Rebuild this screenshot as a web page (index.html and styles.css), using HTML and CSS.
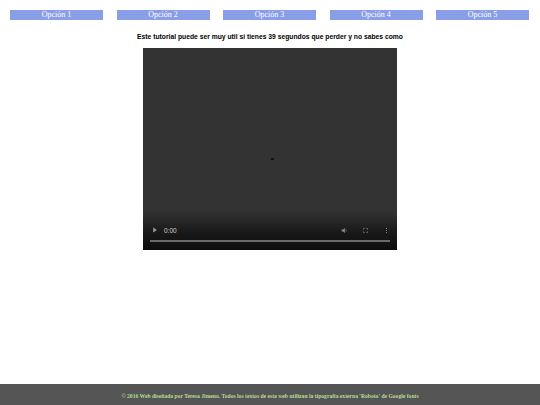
FILE: index.html
```html
<!DOCTYPE html>
<html lang="es">
<head>
<meta charset="utf-8">
<title>Tutorial</title>
<link rel="stylesheet" href="styles.css">
</head>
<body>
<nav class="menu">
  <a class="opt" href="#">Opción 1</a>
  <a class="opt" href="#">Opción 2</a>
  <a class="opt" href="#">Opción 3</a>
  <a class="opt" href="#">Opción 4</a>
  <a class="opt" href="#">Opción 5</a>
</nav>
<main class="content">
  <h1 class="title">Este tutorial puede ser muy util si tienes 39 segundos que perder y no sabes como</h1>
  <div class="player">
    <div class="screen"><span class="spot"></span></div>
    <div class="controls">
      <div class="row">
        <svg class="ic play" viewBox="0 0 10 10"><path d="M2 1 L8 5 L2 9 Z" fill="#9a9a9a"/></svg>
        <span class="time">0:00</span>
        <span class="spacer"></span>
        <svg class="ic" viewBox="0 0 10 10"><path d="M1 3.5 H3 L5.5 1.5 V8.5 L3 6.5 H1 Z" fill="#8a8a8a"/><path d="M7 3.5 Q8 5 7 6.5" stroke="#8a8a8a" stroke-width="0.9" fill="none"/></svg>
        <svg class="ic" viewBox="0 0 10 10"><path d="M2 4 V2 H4 M6 2 H8 V4 M8 6 V8 H6 M4 8 H2 V6" stroke="#8a8a8a" stroke-width="0.9" fill="none"/></svg>
        <svg class="ic" viewBox="0 0 10 10"><circle cx="5" cy="2" r="0.8" fill="#8a8a8a"/><circle cx="5" cy="5" r="0.8" fill="#8a8a8a"/><circle cx="5" cy="8" r="0.8" fill="#8a8a8a"/></svg>
      </div>
      <div class="bar"></div>
    </div>
  </div>
</main>
<footer class="foot">© 2016 Web diseñada por Teresa Jimeno. Todos los textos de esta web utilizan la tipografía externa 'Roboto' de Google fonts</footer>
</body>
</html>
```

FILE: styles.css
```css
html, body {
  margin: 0;
  padding: 0;
  background: #ffffff;
}
body {
  min-height: 100vh;
  display: flex;
  flex-direction: column;
}
.menu {
  display: flex;
  justify-content: space-between;
  padding: 10px 11px 0 10px;
}
.opt {
  width: 93px;
  height: 10px;
  background: #8a9ee8;
  color: #ffffff;
  text-decoration: none;
  font-family: "Liberation Serif", serif;
  font-size: 8px;
  line-height: 10px;
  text-align: center;
}
.content {
  display: flex;
  flex-direction: column;
  align-items: center;
}
.title {
  margin: 12px 0 6px;
  font-family: "Liberation Sans", Arial, sans-serif;
  font-weight: bold;
  font-size: 6.75px;
  line-height: 10px;
  color: #000;
}
.player {
  width: 254px;
  height: 202px;
  background: #333333;
  display: flex;
  flex-direction: column;
}
.screen {
  flex: 1;
  display: flex;
  align-items: center;
  justify-content: center;
}
.spot {
  width: 3px;
  height: 2px;
  background: #111;
  margin-left: 5px;
  margin-top: 59px;
}
.controls {
  height: 40px;
  background: linear-gradient(to bottom, rgba(0,0,0,0) 0%, rgba(0,0,0,0.55) 60%, rgba(0,0,0,0.75) 100%);
  padding: 0 7px;
  display: flex;
  flex-direction: column;
}
.row {
  display: flex;
  align-items: center;
  height: 10px;
  margin-top: 15px;
}
.ic {
  width: 7px;
  height: 7px;
  margin-left: 14px;
}
.ic.play {
  margin-left: 2px;
  width: 6px;
  height: 6px;
}
.time {
  font-family: "Liberation Sans", Arial, sans-serif;
  font-size: 6.5px;
  color: #cfcfcf;
  margin-left: 6px;
}
.spacer {
  flex: 1;
}
.bar {
  margin-top: 5px;
  height: 1.5px;
  background: #6a6a6a;
}
.foot {
  margin-top: auto;
  height: 21px;
  background: #555555;
  color: #b6dc96;
  font-family: "Liberation Serif", serif;
  font-weight: bold;
  font-size: 5.63px;
  line-height: 25px;
  text-align: center;
}
```
